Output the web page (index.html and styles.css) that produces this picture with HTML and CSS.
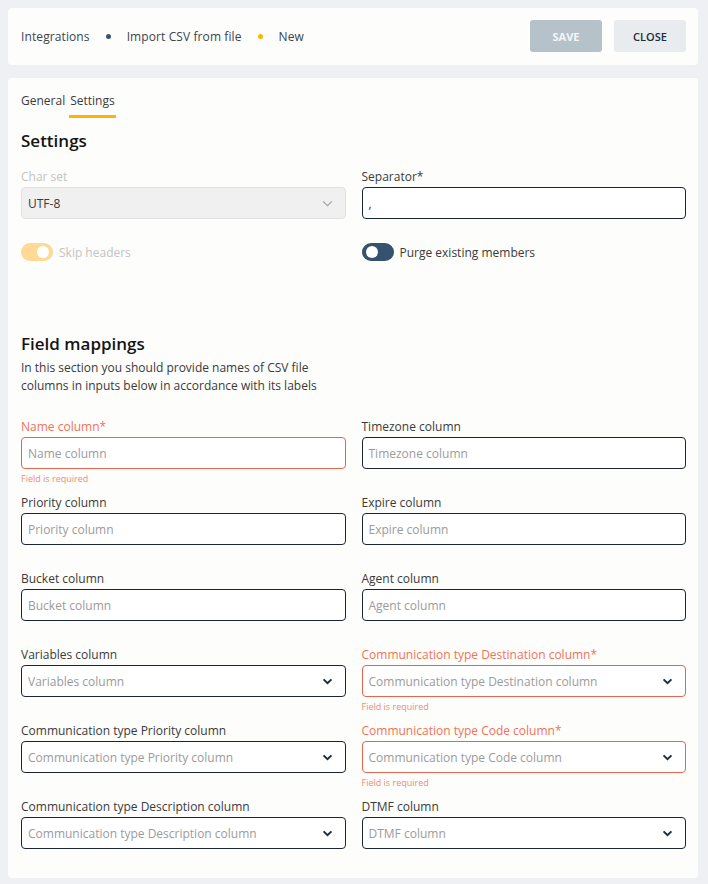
FILE: index.html
```html
<!DOCTYPE html>
<html lang="en">
<head>
    <meta charset="UTF-8">
    <meta name="viewport" content="width=device-width, initial-scale=1.0">
    <title>Import CSV from file</title>
    <link rel="stylesheet" href="styles.css">
</head>
<body>

<!-- Header -->
<header class="page-header">
    <nav class="breadcrumbs">
        <span>Integrations</span>
        <span class="crumb-dot"></span>
        <span>Import CSV from file</span>
        <span class="crumb-dot active"></span>
        <span>New</span>
    </nav>
    <div class="header-actions">
        <button class="btn btn-save" disabled>Save</button>
        <button class="btn btn-close">Close</button>
    </div>
</header>

<section class="main-card">
    <div class="tabs">
        <span class="tab">General</span>
        <span class="tab tab-active">Settings</span>
    </div>

    <h2 class="section-title">Settings</h2>

    <div class="form-grid">
        <div class="field field-disabled">
            <label>Char set</label>
            <div class="control select">
                <span class="value">UTF-8</span>
                <svg class="chevron thin" viewBox="0 0 12 8" width="11" height="7"><path d="M1 1.5l5 5 5-5" fill="none" stroke="currentColor" stroke-width="1.3"/></svg>
            </div>
        </div>
        <div class="field">
            <label>Separator*</label>
            <div class="control"><span class="value">,</span></div>
        </div>
    </div>

    <div class="switch-row">
        <div class="switch-item disabled">
            <span class="switch on"><span class="knob"></span></span>
            <span>Skip headers</span>
        </div>
        <div class="switch-item">
            <span class="switch off"><span class="knob"></span></span>
            <span>Purge existing members</span>
        </div>
    </div>

    <h2 class="section-title mappings-title">Field mappings</h2>
    <p class="section-desc">In this section you should provide names of CSV file<br>columns in inputs below in accordance with its labels</p>

    <div class="form-grid mappings" id="mappings"></div>
</section>

<script>
    // Field list for the mappings grid
    const fields = [
        { label: "Name column", required: true, error: true },
        { label: "Timezone column" },
        { label: "Priority column" },
        { label: "Expire column" },
        { label: "Bucket column" },
        { label: "Agent column" },
        { label: "Variables column", select: true },
        { label: "Communication type Destination column", required: true, error: true, select: true },
        { label: "Communication type Priority column", select: true },
        { label: "Communication type Code column", required: true, error: true, select: true },
        { label: "Communication type Description column", select: true },
        { label: "DTMF column", select: true }
    ];

    const chevron = `<svg class="chevron" viewBox="0 0 12 8" width="11" height="7"><path d="M1.5 1.5l4.5 4.5 4.5-4.5" fill="none" stroke="currentColor" stroke-width="2.2"/></svg>`;

    const mappings = document.getElementById("mappings");
    fields.forEach(f => {
        mappings.innerHTML += `
            <div class="field ${f.error ? 'field-error' : ''}">
                <label>${f.label}${f.required ? '*' : ''}</label>
                <div class="control ${f.select ? 'select' : ''}">
                    <span class="placeholder">${f.label}</span>
                    ${f.select ? chevron : ''}
                </div>
                <div class="hint">${f.error ? 'Field is required' : ''}</div>
            </div>`;
    });
</script>

</body>
</html>
```

FILE: styles.css
```css
/* General Styles */
body {
    font-family: 'Open Sans', 'DejaVu Sans', sans-serif;
    background-color: #eff0f4;
    color: #2d2d2d;
    margin: 0;
    padding: 8px 10px 6px 8px;
    font-size: 12px;
}

/* Header */
.page-header {
    background: #fdfdfb;
    border-radius: 4px;
    height: 57px;
    padding: 0 12px 1px 13px;
    box-sizing: border-box;
    display: flex;
    align-items: center;
    justify-content: space-between;
}

.breadcrumbs {
    display: flex;
    align-items: center;
    color: #3b4452;
    font-size: 12px;
    letter-spacing: 0.1px;
}

.crumb-dot {
    width: 5px;
    height: 5px;
    border-radius: 50%;
    background: #3e5466;
    margin: 0 16px;
}

.crumb-dot.active {
    background: #ffb400;
}

.header-actions {
    display: flex;
    gap: 12px;
}

.btn {
    width: 72px;
    height: 32px;
    border: none;
    border-radius: 3px;
    font-family: inherit;
    font-size: 11px;
    text-transform: uppercase;
}

.btn-save {
    background: #b5c2ca;
    color: #f4f6f7;
    font-weight: 700;
}

.btn-close {
    background: #e8ecef;
    color: #1d2b3a;
    font-weight: 600;
}

/* Main Card */
.main-card {
    background: #fdfdfb;
    border-radius: 4px;
    margin-top: 13px;
    padding: 13px 12px 3px 13px;
}

.tabs {
    display: flex;
    gap: 3px;
    font-size: 12px;
    color: #3b3b3b;
}

.tab {
    padding: 1px 1px 6px;
}

.tab:first-child {
    padding-left: 0;
}

.tab-active {
    border-bottom: 3px solid #ffb400;
}

.section-title {
    font-size: 17px;
    font-weight: 600;
    color: #141414;
    margin: 12px 0 17px;
    line-height: 22px;
}

/* Form Grid */
.form-grid {
    display: grid;
    grid-template-columns: 1fr 1fr;
    column-gap: 16px;
}

.field label {
    display: block;
    line-height: 16px;
    margin-bottom: 2px;
    color: #3a3a3a;
}

.control {
    height: 30px;
    border: 1px solid #1d2433;
    border-radius: 4px;
    background: #fff;
    display: flex;
    align-items: center;
    justify-content: space-between;
    padding: 0 12px 0 6px;
}

.placeholder {
    color: #9b9b9b;
}

.chevron {
    color: #1d2b3a;
}

.hint {
    height: 16px;
    margin: 2px 0 8px;
    font-size: 9px;
    line-height: 16px;
    color: #f08a78;
}

/* Disabled field */
.field-disabled label {
    color: #c3c3c3;
}

.field-disabled .control {
    background: #f0f0f0;
    border-color: #e2e2e2;
}

.field-disabled .value {
    color: #3a3a3a;
}

.chevron.thin {
    color: #9da3a8;
}

/* Error field */
.field-error label {
    color: #f0735a;
}

.field-error .control {
    border-color: #e8654d;
}

/* Switches */
.switch-row {
    display: grid;
    grid-template-columns: 1fr 1fr;
    column-gap: 16px;
    margin-top: 24px;
}

.switch-item {
    display: flex;
    align-items: center;
    gap: 6px;
    color: #3a3a3a;
}

.switch-item.disabled {
    color: #c3c3c3;
}

.switch {
    width: 32px;
    height: 18px;
    border-radius: 9px;
    position: relative;
    display: inline-block;
}

.switch .knob {
    position: absolute;
    top: 3px;
    width: 12px;
    height: 12px;
    border-radius: 50%;
    background: #fff;
}

.switch.on {
    background: #ffd995;
}

.switch.on .knob {
    right: 4px;
}

.switch.off {
    background: #35536e;
}

.switch.off .knob {
    left: 4px;
}

/* Field mappings */
.mappings-title {
    margin-top: 72px;
    margin-bottom: 4px;
}

.section-desc {
    margin: 0 0 24px;
    line-height: 18px;
    color: #3a3a3a;
}
```
